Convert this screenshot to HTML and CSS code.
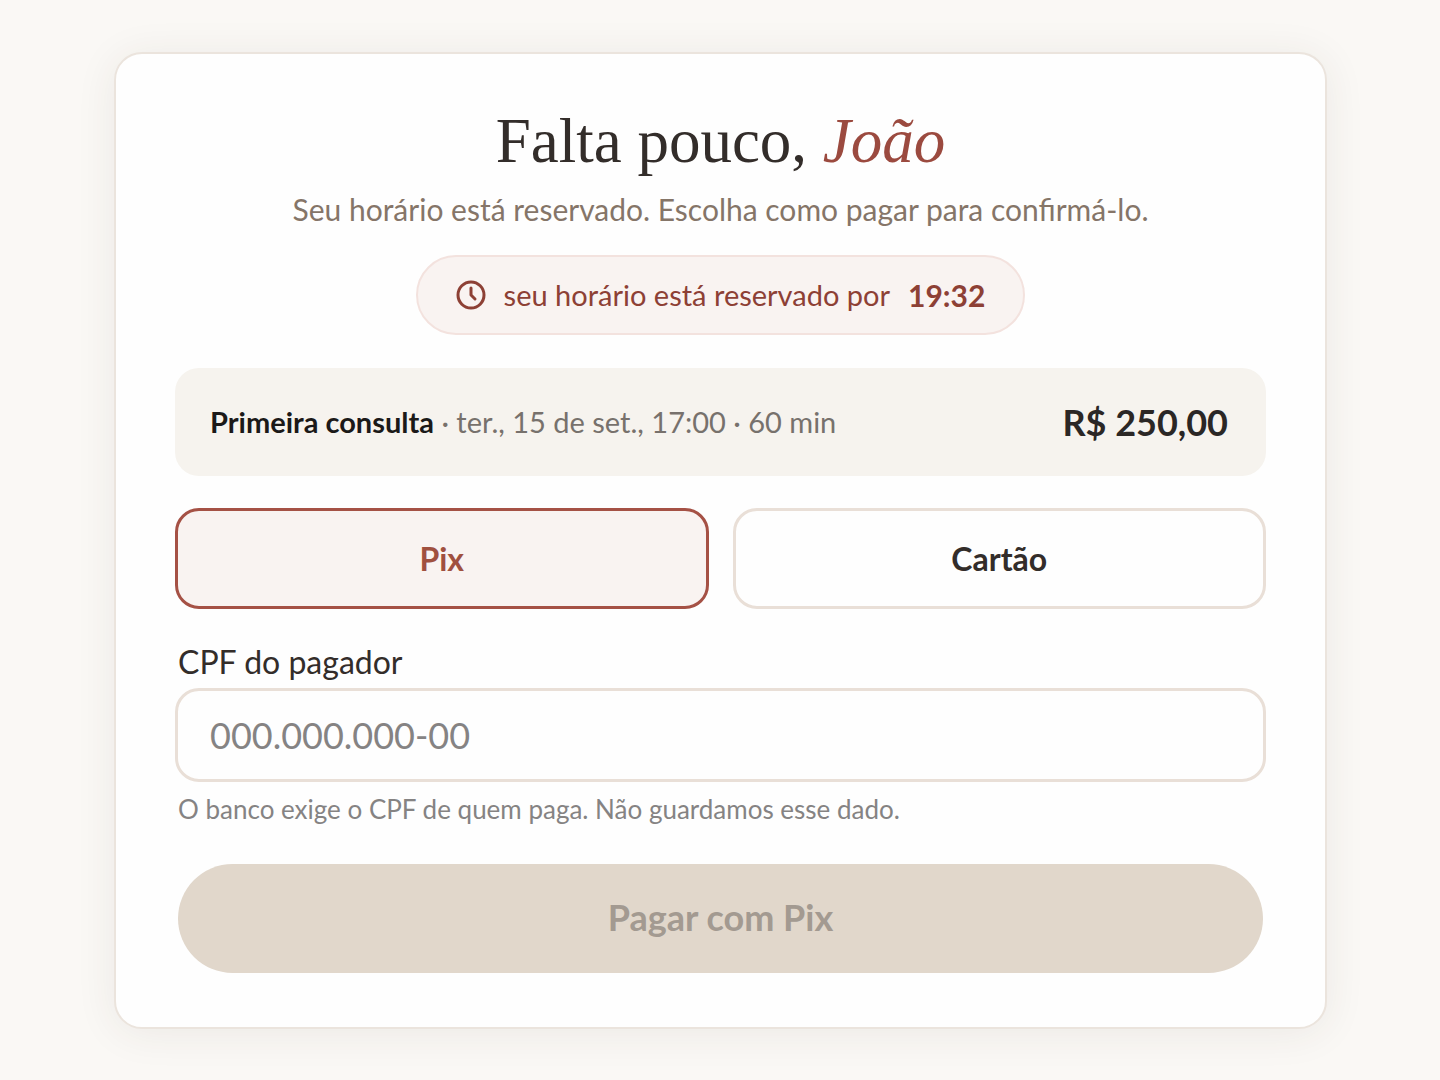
FILE: index.html
```html
<!DOCTYPE html>
<html lang="pt-BR">
<head>
<meta charset="utf-8">
<meta name="viewport" content="width=device-width, initial-scale=1">
<title>Pagamento</title>
<link rel="stylesheet" href="styles.css">
</head>
<body>
<main class="card">
  <h1 class="title">Falta pouco, <em class="name">João</em></h1>
  <p class="subtitle">Seu horário está reservado. Escolha como pagar para confirmá-lo.</p>
  <div class="timer">
    <svg class="clock" viewBox="0 0 30 30" aria-hidden="true"><circle cx="15" cy="15" r="13"/><path d="M15 8v7l4 4"/></svg>
    <span>seu horário está reservado por</span>
    <strong class="time">19:32</strong>
  </div>
  <section class="summary">
    <p class="details"><strong class="service">Primeira consulta</strong> · ter., 15 de set., 17:00 · 60 min</p>
    <strong class="price">R$ 250,00</strong>
  </section>
  <div class="methods">
    <button class="method selected" type="button" aria-pressed="true">Pix</button>
    <button class="method" type="button" aria-pressed="false">Cartão</button>
  </div>
  <form class="form">
    <label class="label" for="cpf">CPF do pagador</label>
    <input class="input" id="cpf" type="text" inputmode="numeric" placeholder="000.000.000-00" aria-describedby="cpf-hint">
    <p class="hint" id="cpf-hint">O banco exige o CPF de quem paga. Não guardamos esse dado.</p>
    <button class="pay" type="submit" disabled>Pagar com Pix</button>
  </form>
</main>
</body>
</html>
```
FILE: styles.css
```css
* { box-sizing: border-box; }

body {
  margin: 0;
  padding: 52px 113px 52px 114px;
  background: #faf8f5;
  color: #332d2a;
  font-family: Lato, "Liberation Sans", sans-serif;
}

h1, p { margin: 0; }

button, input { font-family: inherit; }

.card {
  display: flex;
  flex-direction: column;
  padding: 48px 59px 54px;
  background: #fefefe;
  border: 2px solid #ebe4dd;
  border-radius: 28px;
  box-shadow: 0 4px 40px rgba(70, 50, 35, 0.08);
}

.title {
  font-family: "Liberation Serif", serif;
  font-size: 63px;
  font-weight: 400;
  line-height: 78px;
  text-align: center;
}

.name { color: #9b4a3f; }

.subtitle {
  margin-top: 11px;
  color: #857568;
  font-size: 30px;
  line-height: 36px;
  text-align: center;
}

.timer {
  display: flex;
  align-items: center;
  align-self: center;
  gap: 18px;
  margin-top: 28px;
  padding: 0 38px;
  min-height: 80px;
  border: 2px solid #f3e2de;
  border-radius: 40px;
  background: #f9f3f1;
  color: #8d4035;
  font-size: 29px;
  line-height: 36px;
}

.clock {
  width: 30px;
  height: 30px;
  fill: none;
  stroke: currentColor;
  stroke-width: 3;
  stroke-linecap: round;
  stroke-linejoin: round;
}

.time {
  font-size: 30px;
  font-weight: 700;
}

.summary {
  display: flex;
  align-items: center;
  justify-content: space-between;
  gap: 24px;
  margin-top: 33px;
  min-height: 108px;
  padding: 0 38px 0 35px;
  border-radius: 24px;
  background: #f6f3ee;
}

.details {
  color: #77716c;
  font-size: 29px;
  line-height: 36px;
}

.service { color: #1b1918; }

.price {
  color: #2b2725;
  font-size: 36px;
  line-height: 44px;
}

.methods {
  display: grid;
  grid-template-columns: 1fr 1fr;
  gap: 24px;
  margin-top: 32px;
}

.method {
  height: 101px;
  border: 3px solid #e9dfd7;
  border-radius: 24px;
  background: #fefefe;
  color: #332d2a;
  font-size: 32px;
  font-weight: 700;
}

.method.selected {
  border-color: #a55145;
  background: #f9f3f1;
  color: #a0503f;
}

.form {
  display: flex;
  flex-direction: column;
  margin-top: 33px;
}

.label {
  padding-left: 3px;
  font-size: 32px;
  line-height: 40px;
}

.input {
  width: 100%;
  height: 94px;
  margin-top: 6px;
  padding: 0 32px;
  border: 3px solid #e9dfd7;
  border-radius: 24px;
  background: #fefefe;
  color: #332d2a;
  font-size: 36px;
}

.input::placeholder {
  color: #858383;
  opacity: 1;
}

.hint {
  margin-top: 9px;
  padding-left: 3px;
  color: #858383;
  font-size: 26px;
  line-height: 36px;
}

.pay {
  height: 109px;
  margin: 37px 3px 0;
  padding-bottom: 4px;
  border: 0;
  border-radius: 55px;
  background: #e1d7cb;
  color: #a39a91;
  font-size: 36px;
  font-weight: 700;
}
```
